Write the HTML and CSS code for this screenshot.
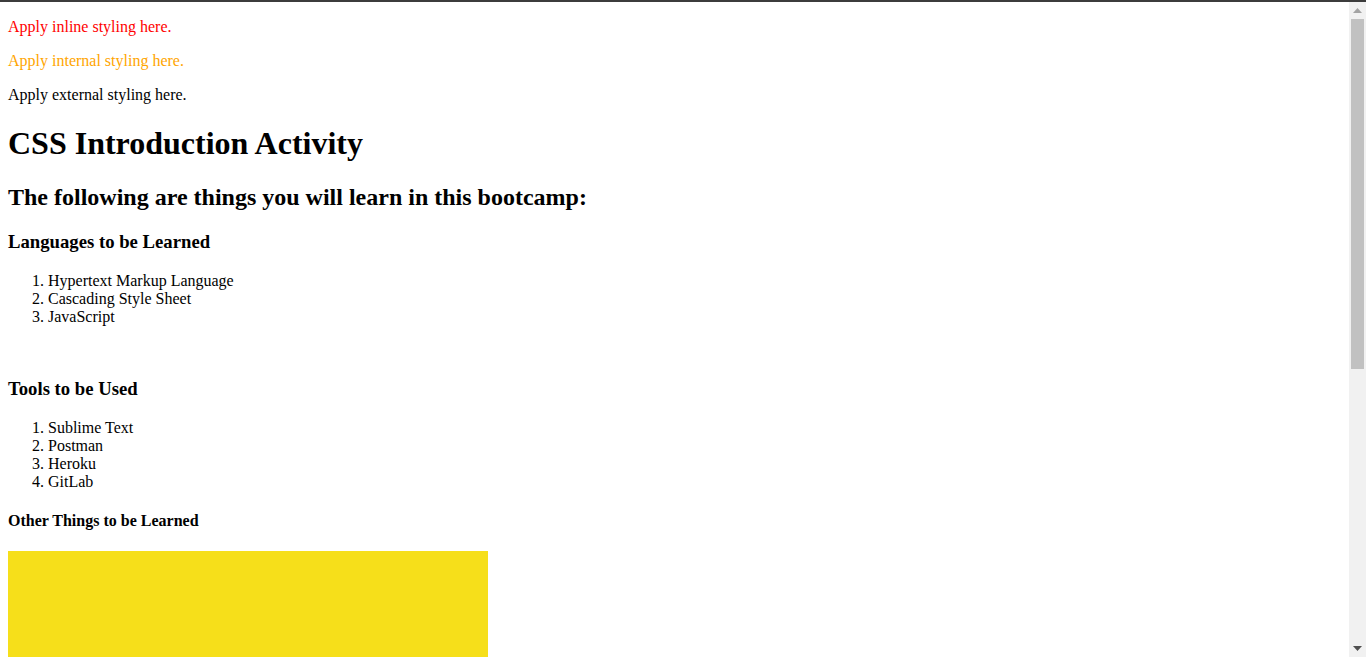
FILE: index.html
```html
<!DOCTYPE html>
<html>
<head>
<meta charset="utf-8">
<title>CSS Introduction Activity</title>
<link rel="stylesheet" href="styles.css">
</head>
<body>
<div class="topline"></div>
<main class="page">
<p class="inline-style">Apply inline styling here.</p>
<p class="internal-style">Apply internal styling here.</p>
<p class="external-style">Apply external styling here.</p>
<h1>CSS Introduction Activity</h1>
<h2>The following are things you will learn in this bootcamp:</h2>
<h3>Languages to be Learned</h3>
<ol>
<li>Hypertext Markup Language</li>
<li>Cascading Style Sheet</li>
<li>JavaScript</li>
</ol>
<br>
<h3>Tools to be Used</h3>
<ol>
<li>Sublime Text</li>
<li>Postman</li>
<li>Heroku</li>
<li>GitLab</li>
</ol>
<h4>Other Things to be Learned</h4>
<div class="box"></div>
</main>
<div class="scrollbar">
  <div class="sb-btn sb-up"><svg width="9" height="5" viewBox="0 0 9 5"><path d="M0 5 L4.5 0 L9 5 Z" fill="#a3a3a3"/></svg></div>
  <div class="sb-track"><div class="sb-thumb"></div></div>
  <div class="sb-btn sb-down"><svg width="9" height="5" viewBox="0 0 9 5"><path d="M0 0 L4.5 5 L9 0 Z" fill="#505050"/></svg></div>
</div>
</body>
</html>
```
FILE: styles.css
```css
html {
  overflow: hidden;
}
body {
  margin: 0;
  font-family: "Liberation Serif", "Times New Roman", serif;
  color: #000;
  background: #fff;
}
.topline {
  height: 2px;
  background: #3c3c3c;
}
.page {
  display: flow-root;
  margin: 0 8px 8px;
}
.inline-style {
  color: #ff0000;
}
.internal-style {
  color: #ffa500;
}
.external-style {
  color: #000;
}
.box {
  width: 480px;
  height: 400px;
  background: #f6df1a;
}
.scrollbar {
  position: fixed;
  top: 2px;
  right: 0;
  bottom: 0;
  width: 17px;
  background: #f1f1f1;
  display: flex;
  flex-direction: column;
}
.sb-btn {
  height: 17px;
  display: flex;
  align-items: center;
  justify-content: center;
  flex: none;
}
.sb-track {
  flex: 1;
  display: flex;
  flex-direction: column;
}
.sb-thumb {
  margin: 0 2px;
  height: 350px;
  background: #c1c1c1;
}
```
